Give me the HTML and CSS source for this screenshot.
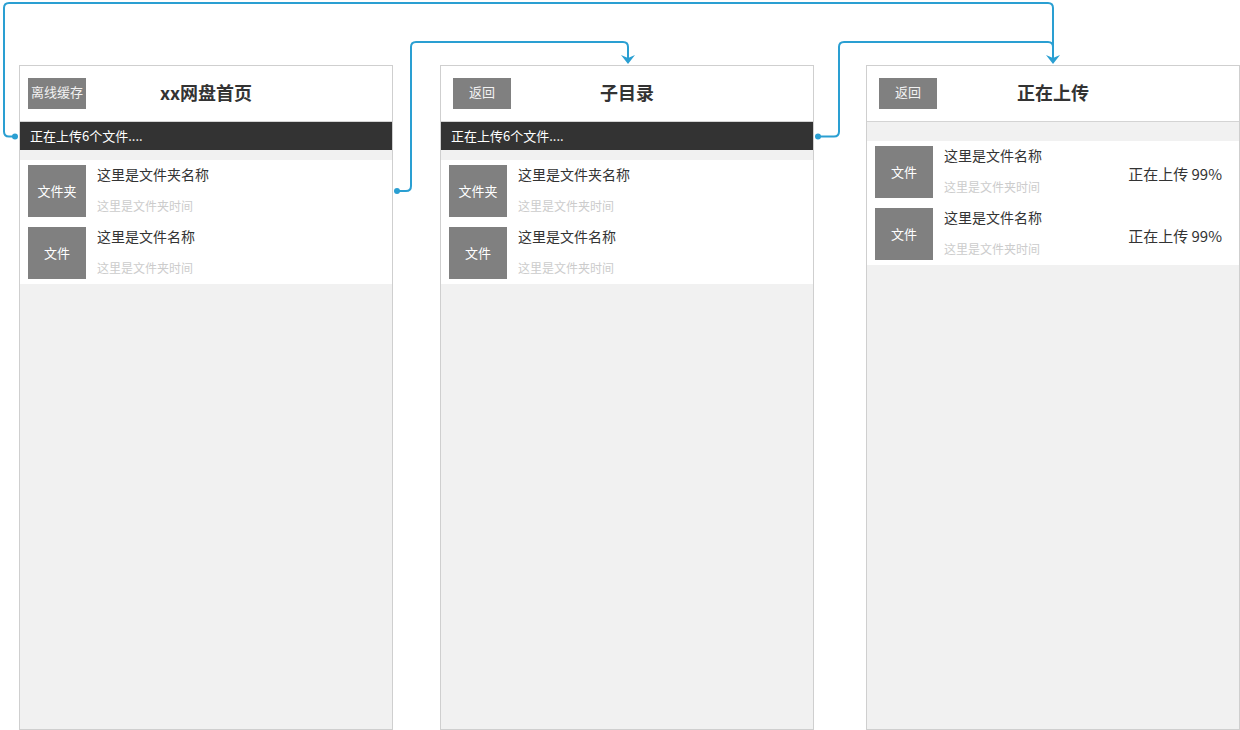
FILE: index.html
```html
<!DOCTYPE html>
<html lang="zh">
<head>
  <meta charset="UTF-8" />
  <title>xx网盘 流程图</title>
  <link rel="stylesheet" href="styles.css">
</head>
<body>
  <div class="canvas">

    <!-- 首页 -->
    <div class="screen screen-home">
      <div class="header">
        <div class="side"><span class="btn">离线缓存</span></div>
        <div class="title">xx网盘首页</div>
        <div class="side"></div>
      </div>
      <div class="upload-bar">正在上传6个文件....</div>
      <div class="list">
        <div class="item">
          <div class="icon">文件夹</div>
          <div class="info">
            <div class="name">这里是文件夹名称</div>
            <div class="time">这里是文件夹时间</div>
          </div>
        </div>
        <div class="item">
          <div class="icon">文件</div>
          <div class="info">
            <div class="name">这里是文件名称</div>
            <div class="time">这里是文件夹时间</div>
          </div>
        </div>
      </div>
    </div>

    <!-- 子目录 -->
    <div class="screen screen-sub">
      <div class="header wide">
        <div class="side"><span class="btn">返回</span></div>
        <div class="title">子目录</div>
        <div class="side"></div>
      </div>
      <div class="upload-bar">正在上传6个文件....</div>
      <div class="list">
        <div class="item">
          <div class="icon">文件夹</div>
          <div class="info">
            <div class="name">这里是文件夹名称</div>
            <div class="time">这里是文件夹时间</div>
          </div>
        </div>
        <div class="item">
          <div class="icon">文件</div>
          <div class="info">
            <div class="name">这里是文件名称</div>
            <div class="time">这里是文件夹时间</div>
          </div>
        </div>
      </div>
    </div>

    <!-- 正在上传 -->
    <div class="screen screen-upload">
      <div class="header wide">
        <div class="side"><span class="btn">返回</span></div>
        <div class="title">正在上传</div>
        <div class="side"></div>
      </div>
      <div class="list upload-list">
        <div class="item">
          <div class="icon">文件</div>
          <div class="info">
            <div class="name">这里是文件名称</div>
            <div class="time">这里是文件夹时间</div>
          </div>
          <div class="progress">正在上传 99%</div>
        </div>
        <div class="item">
          <div class="icon">文件</div>
          <div class="info">
            <div class="name">这里是文件名称</div>
            <div class="time">这里是文件夹时间</div>
          </div>
          <div class="progress">正在上传 99%</div>
        </div>
      </div>
    </div>

    <!-- 连接线 -->
    <svg class="links" width="1240" height="730" viewBox="0 0 1240 730">
      <g fill="none" stroke="#2a9fd2" stroke-width="2">
        <path d="M16,136.5 H9 Q4,136.5 4,131.5 V8 Q4,3 9,3 H1048 Q1053,3 1053,8 V59" />
        <path d="M397,191 H406 Q411,191 411,186 V47 Q411,42 416,42 H623 Q628,42 628,47 V59" />
        <path d="M818,136.5 H834 Q839,136.5 839,131.5 V47 Q839,42 844,42 H1048 Q1053,42 1053,47 V59" />
      </g>
      <g fill="#2a9fd2">
        <circle cx="15" cy="136.5" r="3" />
        <circle cx="397" cy="191" r="3" />
        <circle cx="818" cy="136.5" r="3" />
        <polygon points="621,55 628,58 635,55 628,64" />
        <polygon points="1046,55 1053,58 1060,55 1053,64" />
      </g>
    </svg>
  </div>
</body>
</html>
```

FILE: styles.css
```css
body {
  margin: 0;
  background: #fff;
  font-family: "Noto Sans CJK SC", "Noto Sans", sans-serif;
  color: #333;
}

.canvas {
  position: relative;
  width: 1240px;
  height: 730px;
  overflow: hidden;
}

/* 每个页面是画布上的一个节点 */
.screen {
  position: absolute;
  top: 65px;
  width: 374px;
  height: 665px;
  box-sizing: border-box;
  border: 1px solid #cfcfcf;
  background: #f1f1f1;
  display: flex;
  flex-direction: column;
}

.screen-home { left: 19px; }
.screen-sub { left: 440px; }
.screen-upload { left: 866px; }

.header {
  height: 56px;
  box-sizing: border-box;
  background: #fff;
  border-bottom: 1px solid #d4d4d4;
  display: grid;
  grid-template-columns: 1fr auto 1fr;
  align-items: center;
  padding: 0 8px;
}

.header.wide {
  padding: 0 12px;
}

.side {
  display: flex;
  align-items: center;
}

.btn {
  display: inline-block;
  width: 58px;
  height: 31px;
  box-sizing: border-box;
  padding-bottom: 3px;
  line-height: 28px;
  text-align: center;
  background: #808080;
  color: #f2f2f2;
  font-size: 13px;
}

.title {
  font-size: 18px;
  font-weight: bold;
  color: #333;
  padding-bottom: 4px;
}

.upload-bar {
  height: 28px;
  line-height: 28px;
  background: #333;
  color: #fff;
  font-size: 13px;
  padding-left: 10px;
}

.list {
  margin-top: 10px;
  background: #fff;
  padding: 5px 8px;
  display: flex;
  flex-direction: column;
  gap: 10px;
}

.upload-list {
  margin-top: 19px;
}

.item {
  display: flex;
  align-items: center;
}

.icon {
  width: 58px;
  height: 52px;
  flex-shrink: 0;
  background: #808080;
  color: #fff;
  font-size: 13px;
  display: flex;
  align-items: center;
  justify-content: center;
  padding-bottom: 2px;
  box-sizing: border-box;
}

.info {
  flex: 1;
  margin-left: 11px;
  display: flex;
  flex-direction: column;
  align-self: flex-start;
}

.name {
  font-size: 14px;
  line-height: 20px;
  margin-top: -1px;
  color: #333;
}

.time {
  margin-top: 14px;
  font-size: 12px;
  line-height: 16px;
  color: #cccccc;
}

.progress {
  font-size: 15px;
  color: #333;
  padding-right: 9px;
  margin-top: 2px;
}

.links {
  position: absolute;
  left: 0;
  top: 0;
  pointer-events: none;
}
```
